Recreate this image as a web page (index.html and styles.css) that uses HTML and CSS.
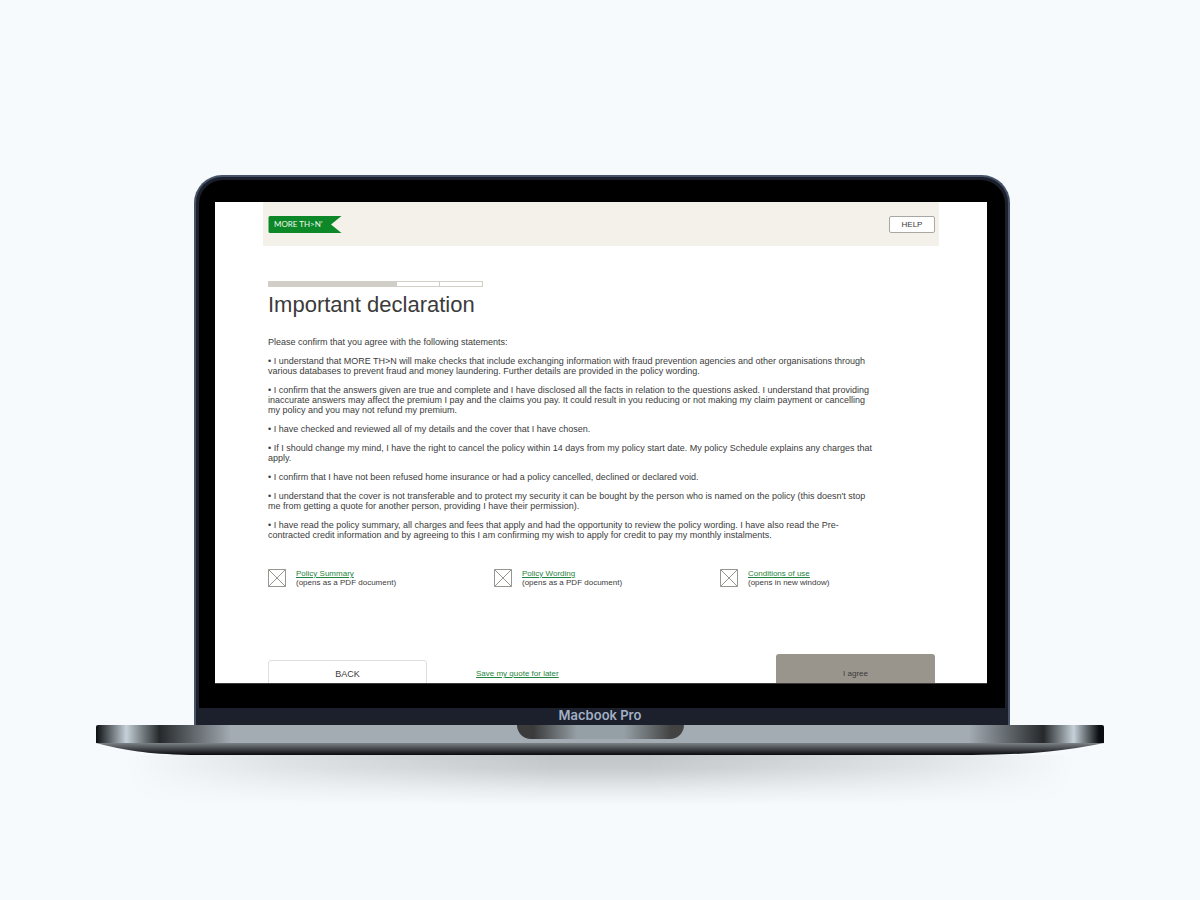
FILE: index.html
```html
<!DOCTYPE html>
<html lang="en">
<head>
<meta charset="utf-8">
<title>Important declaration</title>
<link rel="stylesheet" href="styles.css">
</head>
<body>
<div class="laptop">
  <div class="lid">
    <div class="bezel">
      <div class="screen">
        <header class="topbar">
          <svg class="logo" viewBox="0 0 74 18" role="img" aria-label="MORE TH&gt;N">
            <path class="logo-flag" d="M2 1H73.500L63 9.500L73.500 18H2Q.5 18 .5 16.500V2.500Q.5 1 2 1Z"/>
            <text class="logo-text" x="6" y="12">MORE TH&gt;N’</text>
          </svg>
          <button class="help" type="button">HELP</button>
        </header>
        <main class="content">
          <div class="progress"><span class="step step-done"></span><span class="step"></span><span class="step"></span></div>
          <h1 class="title">Important declaration</h1>
          <div class="statements">
            <p>Please confirm that you agree with the following statements:</p>
            <p>• I understand that MORE TH&gt;N will make checks that include exchanging information with fraud prevention agencies and other organisations through various databases to prevent fraud and money laundering. Further details are provided in the policy wording.</p>
            <p>• I confirm that the answers given are true and complete and I have disclosed all the facts in relation to the questions asked. I understand that providing inaccurate answers may affect the premium I pay and the claims you pay. It could result in you reducing or not making my claim payment or cancelling my policy and you may not refund my premium.</p>
            <p>• I have checked and reviewed all of my details and the cover that I have chosen.</p>
            <p>• If I should change my mind, I have the right to cancel the policy within 14 days from my policy start date. My policy Schedule explains any charges that apply.</p>
            <p>• I confirm that I have not been refused home insurance or had a policy cancelled, declined or declared void.</p>
            <p>• I understand that the cover is not transferable and to protect my security it can be bought by the person who is named on the policy (this doesn't stop me from getting a quote for another person, providing I have their permission).</p>
            <p>• I have read the policy summary, all charges and fees that apply and had the opportunity to review the policy wording. I have also read the Pre-contracted credit information and by agreeing to this I am confirming my wish to apply for credit to pay my monthly instalments.</p>
          </div>
          <div class="documents">
            <div class="document">
              <svg class="doc-icon" viewBox="0 0 18 18" aria-hidden="true"><path d="M.5 .5H17.500V17.500H.5ZM.5 .5L17.500 17.500M17.500 .5L.5 17.500"/></svg>
              <div><a href="#summary">Policy Summary</a><br>(opens as a PDF document)</div>
            </div>
            <div class="document">
              <svg class="doc-icon" viewBox="0 0 18 18" aria-hidden="true"><path d="M.5 .5H17.500V17.500H.5ZM.5 .5L17.500 17.500M17.500 .5L.5 17.500"/></svg>
              <div><a href="#wording">Policy Wording</a><br>(opens as a PDF document)</div>
            </div>
            <div class="document">
              <svg class="doc-icon" viewBox="0 0 18 18" aria-hidden="true"><path d="M.5 .5H17.500V17.500H.5ZM.5 .5L17.500 17.500M17.500 .5L.5 17.500"/></svg>
              <div><a href="#conditions">Conditions of use</a><br>(opens in new window)</div>
            </div>
          </div>
          <div class="actions">
            <button class="back" type="button">BACK</button>
            <a class="save" href="#save">Save my quote for later</a>
            <button class="agree" type="button">I agree</button>
          </div>
        </main>
      </div>
    </div>
    <div class="chin">Macbook Pro</div>
  </div>
  <div class="deck"><div class="notch"></div></div>
  <svg class="underside" viewBox="0 0 1008 12" preserveAspectRatio="none" aria-hidden="true">
    <defs>
      <linearGradient id="under" x1="0" y1="0" x2="0" y2="1">
        <stop offset="0" stop-color="#7c8286"/>
        <stop offset="1" stop-color="#08090b"/>
      </linearGradient>
    </defs>
    <path fill="url(#under)" d="M0 0H1008Q985 5 953 8.500Q918 12 876 12H94Q60 11 42 8.500Q18 5 0 0Z"/>
  </svg>
  <div class="shadow"></div>
</div>
</body>
</html>
```
FILE: styles.css
```css
* {
  box-sizing: border-box;
}

body {
  margin: 0;
  padding: 175px 8% 0;
  background: #f6fafd;
  color: #3b3b3b;
  font-family: "Liberation Sans", Arial, sans-serif;
  font-size: 9px;
}

a {
  color: #1f8540;
}

button {
  font-family: inherit;
  color: inherit;
  padding: 0;
}

.laptop {
  max-width: 1008px;
  margin: 0 auto;
}

.lid {
  margin: 0 94px 0 98px;
  border: 2px solid #475368;
  border-bottom: 0;
  border-radius: 28px 28px 0 0;
  background: #1b202c;
  overflow: hidden;
}

.bezel {
  margin: 3px 3px 0;
  padding: 22px 18px 24px 16px;
  border-radius: 24px 24px 0 0;
  background: #000;
}

.screen {
  aspect-ratio: 772 / 482;
  overflow: hidden;
  background: #fff;
  border-bottom: 1px solid #3a3a38;
}

.topbar {
  display: flex;
  align-items: center;
  justify-content: space-between;
  height: 44px;
  margin: 0 48px;
  padding: 0 4px 0 5px;
  background: #f4f1ea;
}

.logo {
  width: 74px;
  height: 18px;
}

.logo-flag {
  fill: #0c8828;
}

.logo-text {
  font-family: Lato, sans-serif;
  font-size: 8px;
  fill: #eef8ee;
}

.help {
  width: 46px;
  height: 17px;
  border: 1px solid #a8a8a3;
  border-radius: 2px;
  background: #fff;
  font-size: 8px;
}

.content {
  padding: 35px 52px 0 53px;
}

.progress {
  display: grid;
  grid-template-columns: 3fr 1fr 1fr;
  width: 215px;
  height: 6px;
  border: 1px solid #d1cdc7;
}

.step + .step + .step {
  border-left: 1px solid #d1cdc7;
}

.step-done {
  background: #d1cdc7;
}

.title {
  margin: 6px 0 20px;
  font-size: 22px;
  line-height: 24px;
  font-weight: 400;
}

.statements {
  display: flex;
  flex-direction: column;
  gap: 9px;
  max-width: 608px;
  line-height: 10px;
}

.statements p {
  margin: 0;
}

.documents {
  display: grid;
  grid-template-columns: repeat(3, 226px);
  margin-top: 29px;
  font-size: 8px;
  line-height: 9px;
}

.document {
  display: flex;
  gap: 10px;
}

.doc-icon {
  width: 18px;
  height: 18px;
  fill: none;
  stroke: #979792;
}

.actions {
  display: grid;
  grid-template-columns: 159px 1fr 159px;
  align-items: center;
  margin-top: 67px;
}

.back {
  height: 28px;
  border: 1px solid #dedede;
  border-radius: 3px;
  background: #fff;
  font-size: 9px;
}

.save {
  margin-left: 49px;
  font-size: 8px;
}

.agree {
  height: 39px;
  border: 0;
  border-radius: 3px;
  background: #99958d;
  font-size: 8px;
}

.chin {
  height: 17px;
  padding-right: 4px;
  color: #a3b0c4;
  font-family: Inter, sans-serif;
  font-size: 13px;
  font-weight: 600;
  line-height: 15px;
  text-align: center;
}

.deck {
  height: 18px;
  border-radius: 2px 2px 0 0;
  background: linear-gradient(90deg, #0b0e10 0, #c5d0d8 3%, #25292b 6.3%, #a3abb3 13.4%, #a3abb3 86.6%, #25292b 94%, #c5d0d8 97%, #0b0e10 99.5%);
}

.notch {
  width: 167px;
  height: 14px;
  margin: 0 auto;
  border-radius: 0 0 15px 15px;
  background: linear-gradient(90deg, #3b3b3b 10%, #95a0a6 36%, #95a0a6 64%, #434343 92%);
}

.underside {
  display: block;
  width: 100%;
  height: 12px;
}

.shadow {
  height: 50px;
  margin: 0 3%;
  background: linear-gradient(rgba(0, 0, 0, .21), rgba(0, 0, 0, .19) 25%, rgba(0, 0, 0, .06) 70%, transparent);
  mask-image: linear-gradient(90deg, transparent, rgba(0, 0, 0, .45) 16%, #000 45%, #000 55%, rgba(0, 0, 0, .45) 84%, transparent);
}
```
